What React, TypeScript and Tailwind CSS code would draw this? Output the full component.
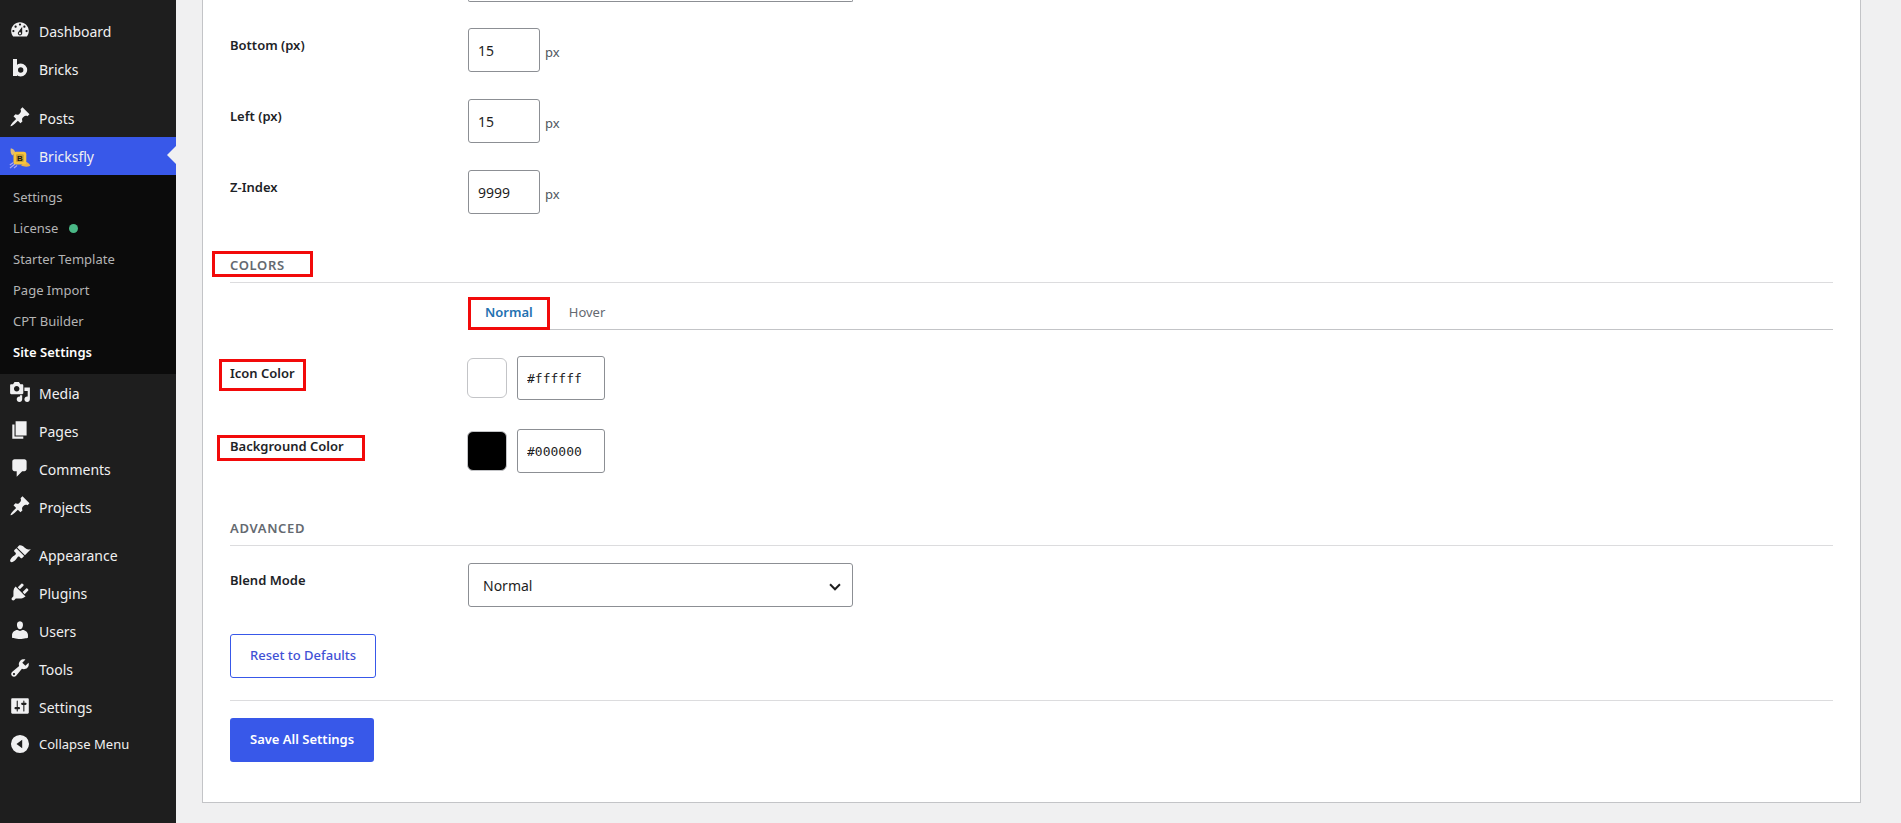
import { useState, type ReactNode } from "react";

const iconPaths = {
  dashboard:
    "M3.76 16h12.48c1.1-1.37 1.76-3.11 1.76-5 0-4.42-3.58-8-8-8s-8 3.58-8 8c0 1.89.66 3.63 1.76 5zM10 4c.55 0 1 .45 1 1s-.45 1-1 1-1-.45-1-1 .45-1 1-1zM6 6c.55 0 1 .45 1 1s-.45 1-1 1-1-.45-1-1 .45-1 1-1zm8 0c.55 0 1 .45 1 1s-.45 1-1 1-1-.45-1-1 .45-1 1-1zm-5.37 5.55L12 7v6c0 1.1-.9 2-2 2s-2-.9-2-2c0-.57.24-1.08.63-1.45zM4 10c.55 0 1 .45 1 1s-.45 1-1 1-1-.45-1-1 .45-1 1-1zm12 0c.55 0 1 .45 1 1s-.45 1-1 1-1-.45-1-1 .45-1 1-1zm-5 3c0-.55-.45-1-1-1s-1 .45-1 1 .45 1 1 1 1-.45 1-1z",
  pin: "M10.44 3.02l1.82-1.82 6.36 6.35-1.83 1.82c-1.05-.68-2.48-.57-3.41.36l-.75.75c-.92.93-1.04 2.35-.35 3.41l-1.83 1.82-2.41-2.41-2.8 2.79c-.42.42-3.38 2.71-3.8 2.29s1.86-3.39 2.28-3.81l2.79-2.79L4.1 9.36l1.83-1.82c1.05.69 2.48.57 3.4-.36l.75-.75c.93-.92 1.05-2.35.36-3.41z",
  media:
    "M13 11V4c0-.55-.45-1-1-1h-1.67L9 1H5L3.67 3H2c-.55 0-1 .45-1 1v7c0 .55.45 1 1 1h10c.55 0 1-.45 1-1zM7 4.5c1.38 0 2.5 1.12 2.5 2.5S8.38 9.5 7 9.5 4.5 8.38 4.5 7 5.62 4.5 7 4.5zM14 6h5v10.5c0 1.38-1.12 2.5-2.5 2.5S14 17.88 14 16.5s1.12-2.5 2.5-2.5c.17 0 .34.02.5.05V9h-3V6zm-4 8.05V13h2v3.5c0 1.38-1.12 2.5-2.5 2.5S7 17.88 7 16.5 8.12 14 9.5 14c.17 0 .34.02.5.05z",
  page: "M6 15V2h10v13H6zm-1 1h8v2H3V5h2v11z",
  comment:
    "M5 2h9c1.1 0 2 .9 2 2v7c0 1.1-.9 2-2 2h-2l-5 5v-5H5c-1.1 0-2-.9-2-2V4c0-1.1.9-2 2-2z",
  brush:
    "M14.48 11.06L7.41 3.99l1.5-1.5c.5-.56 2.3-.47 3.51.32 1.21.8 1.43 1.28 2.91 2.1 1.18.64 2.45 1.26 4.45.85zm-.71.71L6.7 4.7 4.93 6.47c-.39.39-.39 1.02 0 1.41l1.06 1.06c.39.39.39 1.03 0 1.42-.6.6-1.43 1.11-2.21 1.69-.35.26-.7.53-1.01.84C1.43 14.23.4 16.08 1.4 17.07c.99 1 2.84-.03 4.18-1.36.31-.31.58-.66.85-1.02.57-.78 1.08-1.61 1.69-2.21.39-.39 1.02-.39 1.41 0l1.06 1.06c.39.39 1.02.39 1.41 0z",
  plug: "M13.11 4.36L9.87 7.6 8 5.73l3.24-3.24c.35-.34 1.05-.2 1.56.32.52.51.66 1.21.31 1.55zm-8 1.77l.91-1.12 9.01 9.01-1.19.84c-.71.71-2.63 1.16-3.82 1.16H6.14L4.9 17.26c-.59.59-1.54.59-2.12 0-.59-.58-.59-1.53 0-2.12l1.24-1.24v-3.88c0-1.13.4-3.19 1.09-3.89zm7.26 3.97l3.24-3.24c.34-.35 1.04-.21 1.55.31.52.51.66 1.21.31 1.55l-3.24 3.25z",
  user: "M10 9.25c-2.27 0-2.73-3.44-2.73-3.44C7 4.02 7.82 2 9.97 2c2.16 0 2.98 2.02 2.71 3.81 0 0-.41 3.44-2.68 3.44zm0 1.75L12.3 10c2.7 0 4.94 2.33 4.94 4.53v2.49s-3.65 1.13-7.24 1.13c-3.65 0-7.24-1.13-7.24-1.13v-2.49c0-2.250 2.24-4.530 4.940-4.530z",
  wrench:
    "M16.68 9.77c-1.34 1.34-3.3 1.67-4.95.99l-5.41 6.52c-.99.99-2.59.99-3.58 0s-.99-2.59 0-3.57l6.52-5.42c-.68-1.65-.35-3.61.99-4.95 1.28-1.28 3.12-1.62 4.72-1.06l-2.89 2.89 2.82 2.82 2.86-2.87c.53 1.58.18 3.39-1.08 4.65zM3.81 16.21c.4.39 1.04.39 1.43 0 .4-.4.4-1.04 0-1.43-.39-.4-1.03-.4-1.43 0-.39.39-.39 1.03 0 1.43z",
  sliders:
    "M18 16V4c0-.55-.45-1-1-1H3c-.55 0-1 .45-1 1v12c0 .55.45 1 1 1h14c.55 0 1-.45 1-1zM8 11h1c.55 0 1 .45 1 1s-.45 1-1 1H8v1.5c0 .28-.22.5-.5.5s-.5-.22-.5-.5V13H6c-.55 0-1-.45-1-1s.45-1 1-1h1V5.5c0-.28.22-.5.5-.5s.5.22.5.5V11zm5-2h-1c-.55 0-1-.45-1-1s.45-1 1-1h1V5.5c0-.28.22-.5.5-.5s.5.22.5.5V7h1c.55 0 1 .45 1 1s-.45 1-1 1h-1v5.500c0 .28-.22.5-.5.5s-.5-.22-.5-.5V9z",
  collapse: "M10 1.8a8.2 8.2 0 1 0 0 16.4 8.2 8.2 0 0 0 0-16.4zM12 6.2v7.6L6.8 10z",
};

function MenuIcon({ name }: { name: keyof typeof iconPaths }) {
  return (
    <svg viewBox="0 0 20 20" aria-hidden="true" className="mb-0.5 size-[22px] shrink-0 fill-[#f0f0f1]">
      <path fillRule="evenodd" d={iconPaths[name]} />
    </svg>
  );
}

function BricksLogo() {
  return (
    <svg viewBox="0 0 22 22" aria-hidden="true" className="mb-0.5 size-[22px] shrink-0">
      <rect x="4" y="2" width="4" height="17" fill="#f0f0f1" />
      <circle cx="11.700" cy="13" r="4.600" fill="none" stroke="#f0f0f1" strokeWidth="3.800" />
    </svg>
  );
}

function BricksflyLogo() {
  return (
    <svg viewBox="0 0 22 22" aria-hidden="true" className="mt-1 size-[22px] shrink-0">
      <path d="M1.800 1.200c2 .3 3.800 1.700 4.400 4L3.600 8.600C1.600 7 1.200 4 1.800 1.200z" fill="#e3bd77" />
      <path d="M12 18.300l4.500-3.500c2.300.6 4 1.900 4.800 4-3 1.500-6.600 1.200-9.300-.5z" fill="#e9b04a" />
      <path d="M4.500 15.500L.8 18M6 17L1 21M8 18.500l-3 2.500" stroke="#a9a7ee" strokeWidth="1.200" fill="none" />
      <rect x="4.500" y="4.700" width="12.800" height="12.800" rx="2.500" fill="#f6c43c" />
      <rect x="7" y="7.300" width="7.800" height="7.600" rx="1" fill="#c99f35" />
      <text
        x="10.900"
        y="13.900"
        textAnchor="middle"
        className="fill-[#1d1a10] font-['Liberation_Sans',sans-serif] text-[8px] font-bold"
      >
        B
      </text>
    </svg>
  );
}

function MenuItem({ icon, children }: { icon: ReactNode; children: ReactNode }) {
  return (
    <a href="#" className="flex h-[38px] items-center gap-2 pl-[9px] text-[14px] text-[#f0f0f1]">
      {icon}
      <span>{children}</span>
    </a>
  );
}

const submenu = ["Settings", "License", "Starter Template", "Page Import", "CPT Builder", "Site Settings"];

function Sidebar() {
  return (
    <nav aria-label="Admin menu" className="flex w-44 shrink-0 flex-col bg-[#1e1e1e] pt-3">
      <MenuItem icon={<MenuIcon name="dashboard" />}>Dashboard</MenuItem>
      <MenuItem icon={<BricksLogo />}>Bricks</MenuItem>
      <div className="h-[11px]" />
      <MenuItem icon={<MenuIcon name="pin" />}>Posts</MenuItem>
      <div className="relative bg-[#3858e9]">
        <MenuItem icon={<BricksflyLogo />}>Bricksfly</MenuItem>
        <span className="absolute top-[9px] right-0 border-y-[9px] border-r-[9px] border-y-transparent border-r-[#f0f0f1]" />
      </div>
      <ul className="bg-[#0b0b0b] pt-[7px] pb-1.5">
        {submenu.map((label) => (
          <li key={label}>
            <a
              href="#"
              className={
                label === "Site Settings"
                  ? "flex h-[31px] items-center pl-[13px] text-[13px] font-semibold text-white"
                  : "flex h-[31px] items-center gap-[11px] pl-[13px] text-[13px] text-[#b4b4b5]"
              }
            >
              {label}
              {label === "License" && <span className="size-[9px] rounded-full bg-[#4ab886]" />}
            </a>
          </li>
        ))}
      </ul>
      <MenuItem icon={<MenuIcon name="media" />}>Media</MenuItem>
      <MenuItem icon={<MenuIcon name="page" />}>Pages</MenuItem>
      <MenuItem icon={<MenuIcon name="comment" />}>Comments</MenuItem>
      <MenuItem icon={<MenuIcon name="pin" />}>Projects</MenuItem>
      <div className="h-2.5" />
      <MenuItem icon={<MenuIcon name="brush" />}>Appearance</MenuItem>
      <MenuItem icon={<MenuIcon name="plug" />}>Plugins</MenuItem>
      <MenuItem icon={<MenuIcon name="user" />}>Users</MenuItem>
      <MenuItem icon={<MenuIcon name="wrench" />}>Tools</MenuItem>
      <MenuItem icon={<MenuIcon name="sliders" />}>Settings</MenuItem>
      <button type="button" className="flex h-[38px] items-center gap-2 pl-[9px] text-[13px] text-[#f0f0f1]">
        <MenuIcon name="collapse" />
        Collapse Menu
      </button>
    </nav>
  );
}

function Row({ id, label, mark, children }: { id: string; label: string; mark?: ReactNode; children: ReactNode }) {
  return (
    <div className="flex items-start">
      <div className="w-[238px] shrink-0 pt-[7px]">
        <label htmlFor={id} className="relative block w-fit text-[13px] leading-5 font-semibold text-[#1d2327]">
          {label}
          {mark}
        </label>
      </div>
      {children}
    </div>
  );
}

function NumberField({ id, label, initial }: { id: string; label: string; initial: string }) {
  const [value, setValue] = useState(initial);
  return (
    <Row id={id} label={label}>
      <input
        id={id}
        inputMode="numeric"
        value={value}
        onChange={(e) => setValue(e.target.value)}
        className="h-11 w-[72px] rounded-[3px] border border-[#8c8f94] bg-white px-[9px] text-[14px] text-[#1e1e1e]"
      />
      <span className="mt-[14px] ml-[5px] text-[13px] leading-5 text-[#50575e]">px</span>
    </Row>
  );
}

function ColorField({ id, label, initial, mark }: { id: string; label: string; initial: string; mark: ReactNode }) {
  const [value, setValue] = useState(initial);
  return (
    <Row id={id} label={label} mark={mark}>
      <div className="flex items-center gap-2.5">
        <button
          type="button"
          aria-label={`Pick ${label}`}
          style={{ backgroundColor: value }}
          className="-ml-px size-10 rounded-md border border-[#c3c4c7]"
        />
        <input
          id={id}
          value={value}
          onChange={(e) => setValue(e.target.value)}
          className="h-11 w-[88px] rounded-[3px] border border-[#8c8f94] bg-white px-[9px] font-['DejaVu_Sans_Mono',monospace] text-[13px] text-[#1e1e1e]"
        />
      </div>
    </Row>
  );
}

function SectionTitle({ children }: { children: ReactNode }) {
  return (
    <h2 className="border-b border-[#dcdcde] pb-[7px] text-[13px] leading-5 font-semibold tracking-wider text-[#646970] uppercase">
      {children}
    </h2>
  );
}

const outline = "pointer-events-none absolute border-[3px] border-[#f20a0a]";

export default function App() {
  const [tab, setTab] = useState("Normal");
  return (
    <div className="flex min-h-screen bg-[#f0f0f1] font-['Noto_Sans',sans-serif]">
      <Sidebar />
      <main className="mr-10 mb-5 ml-[26px] flex-1 self-start border-x border-b border-[#c3c4c7] bg-white px-[27px] pb-10">
        <div className="ml-[238px] h-0.5 w-[385px] rounded-b-[3px] border-x border-b border-[#8c8f94]" />
        <div className="mt-[26px] flex flex-col gap-[27px]">
          <NumberField id="bottom" label="Bottom (px)" initial="15" />
          <NumberField id="left" label="Left (px)" initial="15" />
          <NumberField id="z-index" label="Z-Index" initial="9999" />
        </div>

        <section className="mt-[41px]">
          <SectionTitle>
            <span className="relative block w-fit">
              Colors
              <span className={`${outline} -top-1 -left-[18px] h-[26px] w-[101px]`} />
            </span>
          </SectionTitle>
          <div role="tablist" className="mt-[14px] ml-[238px] flex gap-0.5 border-b border-[#c3c4c7]">
            {["Normal", "Hover"].map((name) => (
              <button
                key={name}
                type="button"
                role="tab"
                aria-selected={tab === name}
                onClick={() => setTab(name)}
                className={
                  tab === name
                    ? "relative -mb-px h-[33px] border-b-2 border-[#2271b1] px-[17px] text-[13px] font-semibold text-[#2271b1]"
                    : "relative -mb-px h-[33px] border-b-2 border-transparent px-[17px] text-[13px] text-[#646970]"
                }
              >
                {name}
                {name === "Normal" && <span className={`${outline} inset-x-0 top-0 -bottom-0.5`} />}
              </button>
            ))}
          </div>
          <div className="mt-[26px] flex flex-col gap-[29px]">
            <ColorField
              id="icon-color"
              label="Icon Color"
              initial="#ffffff"
              mark={<span className={`${outline} -top-1 -left-[11px] h-8 w-[87px]`} />}
            />
            <ColorField
              id="background-color"
              label="Background Color"
              initial="#000000"
              mark={<span className={`${outline} -top-px -left-[13px] h-[26px] w-[148px]`} />}
            />
          </div>
        </section>

        <section className="mt-[45px]">
          <SectionTitle>Advanced</SectionTitle>
          <div className="mt-[17px]">
            <Row id="blend-mode" label="Blend Mode">
              <div className="relative">
                <select
                  id="blend-mode"
                  className="h-11 w-[385px] appearance-none rounded-[3px] border border-[#8c8f94] bg-white px-[14px] text-[14px] text-[#1e1e1e]"
                >
                  <option>Normal</option>
                </select>
                <svg
                  viewBox="0 0 20 20"
                  aria-hidden="true"
                  className="pointer-events-none absolute top-[15px] right-[9px] size-[18px]"
                >
                  <path d="M4.500 7l5.500 5.500L15.500 7" fill="none" stroke="#1e1e1e" strokeWidth="2.200" />
                </svg>
              </div>
            </Row>
          </div>
        </section>

        <div className="mt-[27px] border-b border-[#dcdcde] pb-[22px]">
          <button
            type="button"
            className="block h-11 rounded-[3px] border border-[#3858e9] px-[19px] text-[13px] font-medium text-[#3f51d5]"
          >
            Reset to Defaults
          </button>
        </div>
        <button
          type="button"
          className="mt-[17px] block h-11 rounded-[3px] bg-[#3858e9] px-5 text-[13px] font-semibold text-white"
        >
          Save All Settings
        </button>
      </main>
    </div>
  );
}
